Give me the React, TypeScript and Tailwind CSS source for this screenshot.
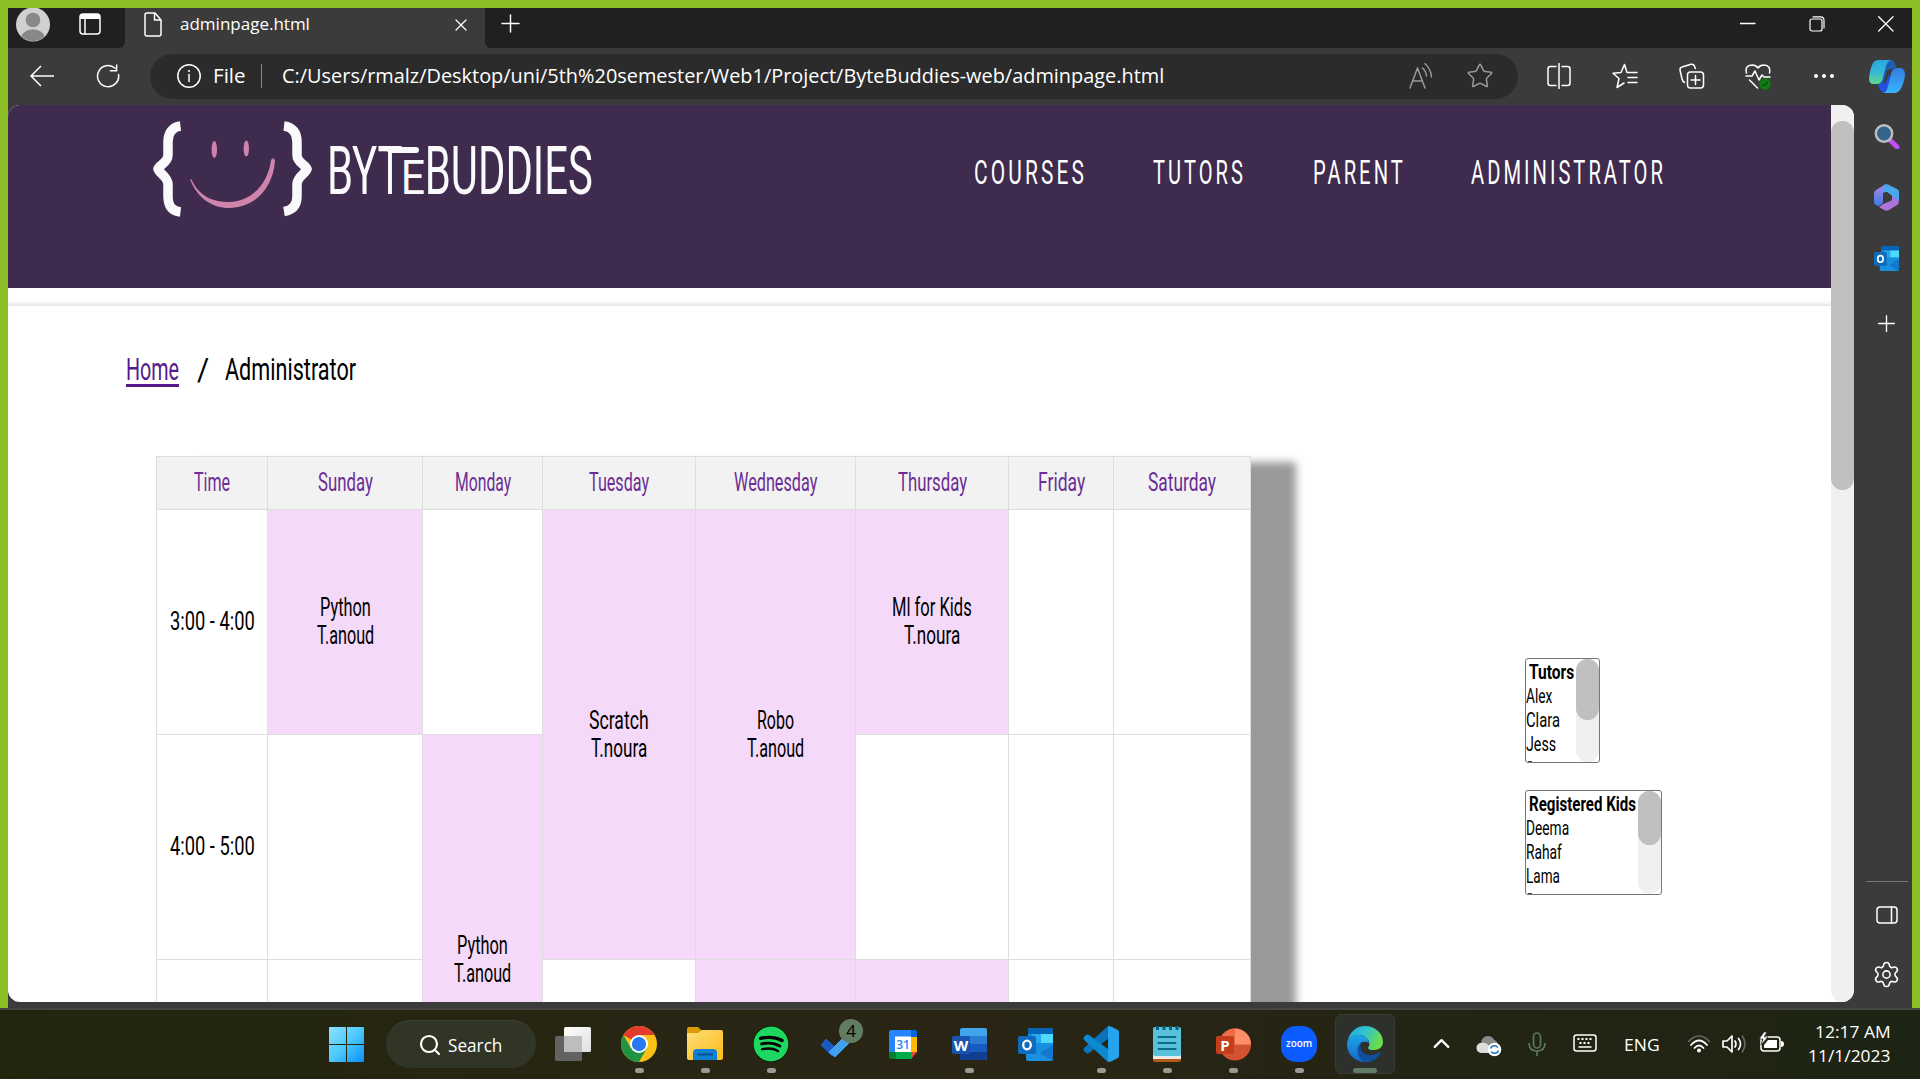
import { useLayoutEffect, useRef } from "react";
import type { ReactNode } from "react";
import { Settings, Search, Star, X, Plus, ChevronUp } from "lucide-react";
import { FaSpotify } from "react-icons/fa";

const page = "font-['Roboto',sans-serif]";
const ui = "font-['Open_Sans','Noto_Sans',sans-serif]";

/* Text condensed horizontally to a fixed advance width. */
function Fit({ w, className = "", display = "inline-block", children }: { w: number; className?: string; display?: string; children: ReactNode }) {
  const ref = useRef<HTMLSpanElement>(null);
  useLayoutEffect(() => {
    const el = ref.current;
    if (el) el.style.transform = `scaleX(${w / el.offsetWidth})`;
  }, [w]);
  return (
    <span className={`${display} shrink-0 whitespace-nowrap ${className}`} style={{ width: w }}>
      <span ref={ref} className="inline-block origin-left">{children}</span>
    </span>
  );
}

function Svg({ w, h, vb, className = "", children }: { w: number; h: number; vb?: string; className?: string; children: ReactNode }) {
  return (
    <svg width={w} height={h} viewBox={vb ?? `0 0 ${w} ${h}`} preserveAspectRatio="none" fill="none" stroke="none" className={`block shrink-0 ${className}`}>
      {children}
    </svg>
  );
}

const line = { stroke: "#fff", strokeWidth: 1.5, fill: "none", strokeLinecap: "round", strokeLinejoin: "round" } as const;

function TabBar() {
  return (
    <div className="flex h-10 bg-[#3b3b3b]">
      <div className="flex w-[117px] rounded-br-md bg-[#202020] pl-2">
        <Svg w={34} h={34}>
          <circle cx="17" cy="16.5" r="17" fill="#d2d0ce" />
          <clipPath id="pf"><circle cx="17" cy="16.5" r="16.5" /></clipPath>
          <g clipPath="url(#pf)" fill="#8a8886">
            <circle cx="17" cy="12" r="7.3" />
            <ellipse cx="17" cy="31" rx="12" ry="9.8" />
          </g>
        </Svg>
        <Svg w={22} h={22} className="mt-[5px] ml-[29px]">
          <rect x="1" y="1" width="20" height="20" rx="3" {...line} />
          <path d="M1 6V3Q1 1 4 1H18Q21 1 21 3V6Z" fill="#fff" />
          <path d="M6 6V21" {...line} />
        </Svg>
      </div>
      <div className="flex w-[360px] pl-[19px]">
        <Svg w={18} h={25} className="mt-1">
          <path d="M1 3Q1 1 3 1H11L17 8V22Q17 24 15 24H3Q1 24 1 22ZM10.500 1V8H17" {...line} />
        </Svg>
        <Fit w={130} className={`ml-[18px] mt-[3px] text-[17px] leading-[25px] text-white ${ui}`}>adminpage.html</Fit>
        <X className="mt-[7px] ml-[141px] text-white" size={20} strokeWidth={1.5} />
      </div>
      <div className="flex flex-1 rounded-bl-md bg-[#202020] text-white">
        <Plus className="mt-px ml-[11px]" size={29} strokeWidth={1.2} />
        <Svg w={16} h={16} className="mt-2 ml-[1215px]"><path d="M0 7.500H15" {...line} strokeWidth="1.3" /></Svg>
        <Svg w={16} h={16} className="mt-2 ml-[53px]">
          <rect x="1" y="3" width="12" height="12" rx="2" {...line} strokeWidth="1.2" />
          <path d="M4 .8H11.500Q15 .8 15 4.500V12" {...line} strokeWidth="1.2" />
        </Svg>
        <Svg w={16} h={16} className="mt-2 ml-[53px]"><path d="M.7.700 15 15M15 .7.700 15" {...line} strokeWidth="1.3" /></Svg>
      </div>
    </div>
  );
}

function ToolBar() {
  return (
    <div className="flex h-[57px] items-center bg-[#3b3b3b] pb-px pl-[22px]">
      <Svg w={24} h={22} className=""><path d="M24 11H1M11 1 1 11 11 21" {...line} strokeLinecap="butt" /></Svg>
      <Svg w={24} h={24} vb="0 0 25 25" className="ml-[42px]">
        <path d="M20 4.500A11 11 0 1 0 23.500 11" {...line} />
        <path d="M21.500 1V7H15" {...line} />
      </Svg>
      <div className="ml-[30px] flex h-[45px] w-[1368px] items-center rounded-full bg-[#2b2b2b] pl-[27px]">
        <Svg w={24} h={24}>
          <circle cx="12" cy="12" r="11.200" {...line} />
          <path d="M12 10.500V17.500" {...line} />
          <circle cx="12" cy="7" r="1.100" fill="#fff" />
        </Svg>
        <Fit w={33} className={`ml-3 text-xl leading-7 text-white ${ui}`}>File</Fit>
        <div className="ml-[15px] h-6 w-px bg-[#8a8a8a]" />
        <Fit w={882} className={`ml-5 text-xl leading-7 text-white ${ui}`}>C:/Users/rmalz/Desktop/uni/5th%20semester/Web1/Project/ByteBuddies-web/adminpage.html</Fit>
        <Svg w={24} h={26} className="ml-[245px]">
          <path d="M1 25 8.500 5 16 25M3.800 18H13.200M13.500 5Q17 8 17.500 13M16 .8Q22 6 22.500 14" {...line} stroke="#9a9a9a" />
        </Svg>
        <Star className="ml-[33px] text-[#9a9a9a]" size={28} strokeWidth={1.300} />
      </div>
      <Svg w={24} h={26} className="ml-[29px]">
        <path d="M9 3.500H3.500Q1 3.500 1 6V20Q1 22.500 3.500 22.500H9M15 3.500H20.500Q23 3.500 23 6V20Q23 22.500 20.500 22.500H15M12 0V26" {...line} />
      </Svg>
      <Svg w={26} h={26} className="ml-[41px]">
        <path d="M15 9.500 12.500 1.500 9 9.500 1 10.200 7 15.500 5 24.500 12 20M15 9.500H25M16 14.500H25M16 19.500H25" {...line} />
      </Svg>
      <Svg w={26} h={26} className="ml-[41px]">
        <rect x="8.500" y="9" width="16" height="16" rx="3" {...line} />
        <path d="M16.500 12.500V21.500M12 17H21M5.500 19.500Q3.500 18.500 3 16L1 7Q.7 4.500 3 4L12 1.200Q15 .8 15.700 3.500L16.300 5.500" {...line} />
      </Svg>
      <Svg w={26} h={27} className="ml-[40px]">
        <path d="M1.500 10Q-.5 2.500 7 2Q11 2 13 5Q15 2 19 2Q26 2.500 24.500 10M1 13H7L10 8 14 17 17 12 19 14H25M4.500 17 12.500 25" {...line} />
        <circle cx="20" cy="21" r="5.800" fill="#107c10" />
        <path d="M17.500 21 19.300 23 23 19" stroke="#222" strokeWidth="1" />
      </Svg>
      <Svg w={22} h={6} className="ml-[42px]"><g fill="#fff"><circle cx="3" cy="3" r="2" /><circle cx="11" cy="3" r="2" /><circle cx="19" cy="3" r="2" /></g></Svg>
      <Svg w={36} h={33} className="ml-[34px]">
        <defs>
          <linearGradient id="cp1" x1="0" y1="0" x2="0" y2="1"><stop stopColor="#2aa7dc" /><stop offset=".5" stopColor="#35b8d8" /><stop offset="1" stopColor="#63d98c" /></linearGradient>
          <linearGradient id="cp2" x1="0" y1="0" x2="0" y2="1"><stop stopColor="#2f7de0" /><stop offset="1" stopColor="#3cb4fb" /></linearGradient>
        </defs>
        <path d="M8 0H23Q26 1 27 8L18 10 14 25H9L15 33H17Q11 33 9 25Z" fill="#1c5fb5" />
        <path d="M9 24H16L20 14 21 28 15 33Q11 32 9 24Z" fill="#244fe0" />
        <path d="M9 0H22Q18 1 16.500 8L13.500 19Q12 24 8 24H4Q0 24 0 18Q1 9 4 3Q6 0 9 0Z" fill="url(#cp1)" />
        <path d="M27 8H32Q36 9 36 15Q35 24 31 30Q29 33 26 33H14Q18 32 19 26L22 14Q23 9 27 8Z" fill="url(#cp2)" />
      </Svg>
    </div>
  );
}

function OutlookArt() {
  return (
    <>
      <rect x="10" y="0" width="25" height="26" rx="2" fill="#1490df" />
      <path d="M10 2Q10 0 12 0H33Q35 0 35 2V6H10Z" fill="#0364b8" />
      <rect x="22" y="6" width="13" height="9" fill="#50d9ff" />
      <rect x="14" y="6" width="9" height="9" fill="#28a8ea" />
      <path d="M8 18 22 26 35 17V30Q35 33 32 33H10Q8 33 8 30Z" fill="#1b8fe0" />
      <path d="M22 25 35 33V17Z" fill="#1677cf" />
      <rect x="0" y="8" width="18" height="18" rx="2" fill="#0f6cbd" />
      <ellipse cx="9" cy="17" rx="3.800" ry="4.300" stroke="#fff" strokeWidth="2.300" />
    </>
  );
}

function SideBar() {
  return (
    <div className="flex w-[58px] flex-col items-center bg-[#3b3b3b] pl-[7px]">
      <Svg w={26} h={26} className="mt-[18px]">
        <path d="M16 17 23 24" stroke="#c04df5" strokeWidth="5" strokeLinecap="round" />
        <circle cx="10" cy="10.500" r="8.200" fill="#35648c" stroke="#bdbdbd" strokeWidth="2.500" />
      </Svg>
      <Svg w={25} h={27} className="mt-[35px]">
        <defs><linearGradient id="m3" x1="0" y1="0" x2="0" y2="1"><stop stopColor="#b487ea" /><stop offset="1" stopColor="#3a7be0" /></linearGradient></defs>
        <path d="M12 0 2 6Q0 7 0 10V18Q0 21 5 22L9 19V7Z" fill="url(#m3)" />
        <path d="M11 0 9 3V9L13 8 19 13 25 17V8Q25 6 23 5L14 .5Q12 0 11 0Z" fill="#4aa7ee" />
        <path d="M18 12V16L9 20 5 23 11 26.500Q13 27 15 26L23 21Q25 20 25 17Z" fill="#ac74dc" />
        <path d="M9 9 13 8 18 12V16L9 20Z" fill="#3b3b3b" />
      </Svg>
      <Svg w={25} h={25} vb="0 0 35 33" className="mt-[35px]"><OutlookArt /></Svg>
      <Plus className="mt-[39px] text-white" size={27} strokeWidth={1.200} />
      <div className="mt-auto h-px w-[42px] bg-[#777]" />
      <Svg w={22} h={18} className="mt-6"><rect x="1" y="1" width="20" height="16" rx="3" {...line} /><path d="M15.500 1V17" {...line} /></Svg>
      <Settings className="mt-[36px] mb-[13px] text-white" size={29} strokeWidth={1.300} />
    </div>
  );
}

const nav = [
  { label: "COURSES", w: 113, cls: "" },
  { label: "TUTORS", w: 93, cls: "ml-[66px]" },
  { label: "PARENT", w: 93, cls: "ml-[67px]" },
  { label: "ADMINISTRATOR", w: 195, cls: "ml-[65px]" },
];

function Header() {
  return (
    <header className="flex h-[183px] bg-[#3e2b4e]">
      <Svg w={165} h={105} vb="150 115 165 105" className="mt-2.5 ml-[142px]">
        <path d="M180.500 126C172 127 168 133 168 142V155C168 163 159 165 158 169C159 173 168 177 168 184V196C168 206 172 211 180.500 212" stroke="#fafafc" strokeWidth="9.500" />
        <path d="M284 126C293 127 297 133 297 142V155C297 163 306 165 307 169C306 173 297 177 297 184V196C297 205 293 210 284 211.500" stroke="#fafafc" strokeWidth="9.500" />
        <ellipse cx="214.300" cy="149.500" rx="2.700" ry="8.500" fill="#cf83ad" />
        <ellipse cx="246.300" cy="148.500" rx="2.700" ry="8" fill="#cf83ad" />
        <path d="M190 179C197 198 212 208 229 208C255 208 273 188 275 161Q274 156 271 160C268 185 250 202 229 202C212 202 199 196 191.500 179.500Z" fill="#cf83ad" />
      </Svg>
      <div className={`relative mt-8 ml-[12px] h-[68px] text-[67px] leading-[68px] text-[#fafafc] ${page}`}>
        <Fit w={266}>BYT<span className="mr-[11px] -ml-[3px] inline-block origin-left scale-x-[1.4] text-[49px] leading-[49px]">E</span>BUDDIES</Fit>
        <div className="absolute top-[10px] left-[60px] h-[6px] w-[32px] rounded-sm bg-[#fafafc]" />
      </div>
      <nav className={`mt-12 ml-[381px] flex h-10 text-[33.500px] leading-10 tracking-[5px] text-white ${page}`}>
        {nav.map((n) => <a key={n.label} className={n.cls}><Fit w={n.w}>{n.label}</Fit></a>)}
      </nav>
    </header>
  );
}

const days: [string, number][] = [
  ["Time", 36], ["Sunday", 55], ["Monday", 56], ["Tuesday", 60], ["Wednesday", 83], ["Thursday", 69], ["Friday", 47], ["Saturday", 68],
];

function Cell({ lines = [], cls = "bg-white" }: { lines?: [string, number][]; cls?: string }) {
  return (
    <div className={`flex flex-col items-center justify-center border-t border-l border-[#ddd] leading-7 ${cls}`}>
      {lines.map(([t, w]) => <Fit key={t} w={w} className="h-7">{t}</Fit>)}
    </div>
  );
}

function Schedule() {
  const pink = "bg-[#f4d9f8]";
  return (
    <div className={`mt-[67px] ml-[148px] grid w-[1095px] grid-cols-[111px_155px_120px_153px_160px_153px_105px_137px] grid-rows-[53px_225px_225px_225px] border-r border-[#ddd] text-[25px] text-black shadow-[45px_6px_8px_rgba(0,0,0,0.4)] ${page}`}>
      {days.map(([d, w]) => <Cell key={d} lines={[[d, w]]} cls="bg-[#f2f2f2] text-[#6c2d94]" />)}
      <Cell lines={[["3:00 - 4:00", 85]]} />
      <Cell lines={[["Python", 51], ["T.anoud", 57]]} cls={pink} />
      <Cell />
      <Cell lines={[["Scratch", 60], ["T.noura", 56]]} cls="row-span-2 bg-[#f4d9f8]" />
      <Cell lines={[["Robo", 37], ["T.anoud", 57]]} cls="row-span-2 bg-[#f4d9f8]" />
      <Cell lines={[["Ml for Kids", 80], ["T.noura", 56]]} cls={pink} />
      <Cell /><Cell />
      <Cell lines={[["4:00 - 5:00", 85]]} />
      <Cell />
      <Cell lines={[["Python", 51], ["T.anoud", 57]]} cls="row-span-2 bg-[#f4d9f8]" />
      <Cell /><Cell /><Cell />
      <Cell /><Cell /><Cell />
      <Cell cls={pink} /><Cell cls={pink} />
      <Cell /><Cell />
    </div>
  );
}

function ListBox({ title, tw, items, box, thumb }: { title: string; tw: number; items: [string, number][]; box: string; thumb: string }) {
  return (
    <div className={`flex h-[105px] justify-between overflow-hidden rounded-[3px] border border-[#767676] bg-white text-black ${box} ${page}`}>
      <div className="relative w-0 pt-px">
        <Fit w={tw} display="block" className="ml-[3px] h-[25px] text-[21px] leading-[24px] font-bold">{title}</Fit>
        {items.map(([t, w]) => <Fit key={t} w={w} display="block" className="h-6 text-[19.500px] leading-6">{t}</Fit>)}
        <div className="absolute bottom-0 left-0.5 h-px w-1 bg-[#444]" />
      </div>
      <div className="w-[23px] shrink-0 rounded-full bg-[#f0f0f0]"><div className={`rounded-full bg-[#c0c0c0] ${thumb}`} /></div>
    </div>
  );
}

function Page() {
  return (
    <main className="flex h-[897px] w-[1846px] overflow-hidden rounded-xl bg-white">
      <div className="h-full w-[1823px] overflow-hidden">
        <Header />
        <div className="h-[18px] bg-linear-to-b from-white from-70% to-[#e6e6e6]" />
        <div className={`mt-[43px] flex h-10 items-center pl-[118px] text-[32px] leading-10 text-black ${page}`}>
          <a className="relative text-[#551a8b]">
            <Fit w={53}>Home</Fit>
            <span className="absolute bottom-[2px] left-0 h-[3px] w-[53px] bg-[#551a8b]" />
          </a>
          <Fit w={12} className="ml-[18px]">/</Fit>
          <Fit w={131} className="ml-4">Administrator</Fit>
        </div>
        <div className="flex">
          <Schedule />
          <div className="mt-[269px] ml-[274px]">
            <ListBox title="Tutors" tw={45} items={[["Alex", 26], ["Clara", 34], ["Jess", 30]]} box="w-[75px]" thumb="h-[61px]" />
            <div className="h-[27px]" />
            <ListBox title="Registered Kids" tw={107} items={[["Deema", 43], ["Rahaf", 36], ["Lama", 34]]} box="w-[137px]" thumb="h-[54px]" />
          </div>
        </div>
      </div>
      <div className="w-[23px] rounded-b-full bg-[#f0f0f0] pt-4"><div className="h-[369px] rounded-full bg-[#c0c0c0]" /></div>
    </main>
  );
}

function TaskIcon({ children, dot = true }: { children: ReactNode; dot?: boolean }) {
  return (
    <div className="flex w-[66px] flex-col items-center pt-4">
      <div className="flex h-9 items-center justify-center">{children}</div>
      {dot && <div className="mt-1.5 h-[5px] w-[9px] rounded-full bg-[#9b9b95]" />}
    </div>
  );
}

function Letter({ x, children }: { x: number; children: string }) {
  return <text x={x} y="22.500" fill="#fff" fontSize="15" fontWeight="700" textAnchor="middle" fontFamily="Open Sans, sans-serif">{children}</text>;
}

function TaskBar() {
  return (
    <footer className={`flex h-[71px] border-t-2 border-[#45463f] bg-linear-to-r from-[#22260f] via-[#2a2515] to-[#1d2413] text-white ${ui}`}>
      <Svg w={35} h={35} className="mt-[17px] ml-[329px]">
        <defs><linearGradient id="win" x1="0" y1="0" x2="35" y2="35" gradientUnits="userSpaceOnUse"><stop stopColor="#8fe0ff" /><stop offset=".5" stopColor="#4cc9fa" /><stop offset="1" stopColor="#0a8ffa" /></linearGradient></defs>
        <path d="M0 1Q0 0 1 0H17V17H0ZM18 0H34Q35 0 35 1V17H18ZM0 18H17V35H1Q0 35 0 34ZM18 18H35V34Q35 35 34 35H18Z" fill="url(#win)" />
      </Svg>
      <div className="mt-2.5 ml-[22px] flex h-12 w-[150px] items-center rounded-full border-t border-[#3c4132] bg-[#303526] pl-[32px]">
        <Search size={24} strokeWidth={2.200} />
        <Fit w={54} className="ml-[6px] text-[17.500px] leading-6">Search</Fit>
      </div>
      <div className="ml-[4px] flex">
        <TaskIcon dot={false}>
          <Svg w={36} h={34}>
            <defs><linearGradient id="tv" x1="0" y1="0" x2="1" y2="1"><stop stopColor="#fff" /><stop offset="1" stopColor="#dedede" /></linearGradient></defs>
            <rect x="9" y="0" width="27" height="25" rx="1.500" fill="url(#tv)" />
            <rect x="0" y="9" width="27" height="25" rx="1.500" fill="#626262" />
            <rect x="9" y="9" width="18" height="16" fill="#bdbdbd" />
          </Svg>
        </TaskIcon>
        <TaskIcon>
          <Svg w={36} h={36} vb="0 0 48 48">
            <circle cx="24" cy="24" r="24" fill="#fbc116" />
            <path d="M24 24 3.200 12A24 24 0 0 1 44.800 12H24Z" fill="#e33b2e" />
            <path d="M3.200 12A24 24 0 0 0 24 48L34.400 30 24 24 13.600 30Z" fill="#229342" />
            <circle cx="24" cy="24" r="12" fill="#fff" />
            <circle cx="24" cy="24" r="9.500" fill="#2a78f0" />
          </Svg>
        </TaskIcon>
        <TaskIcon>
          <Svg w={36} h={34}>
            <defs><linearGradient id="fx" x1="0" y1="0" x2="1" y2="1"><stop stopColor="#ffdd7c" /><stop offset="1" stopColor="#fbbc16" /></linearGradient></defs>
            <path d="M0 2Q0 0 2 0H11L15 4 12 8H0Z" fill="#dc9b06" />
            <path d="M0 6H11L15 3H34Q36 3 36 5V31Q36 33 34 33H2Q0 33 0 31Z" fill="url(#fx)" />
            <path d="M6 33V26Q6 22 10 22H26Q30 22 30 26V33Z" fill="#0f7fd0" />
            <path d="M11 27.500H25" stroke="#064f94" strokeWidth="2" strokeLinecap="round" />
          </Svg>
        </TaskIcon>
        <TaskIcon>
          <div className="rounded-full bg-black"><FaSpotify size={36} color="#1ed760" /></div>
        </TaskIcon>
        <div className="relative">
          <TaskIcon dot={false}>
            <Svg w={34} h={24} className="mt-1">
              <path d="M1 11 6 5 17 15 12 22Z" fill="#185abd" stroke="#185abd" strokeWidth="1" strokeLinejoin="round" />
              <path d="M9 18 26 1 32 6 15 23Z" fill="#41a0f0" stroke="#41a0f0" strokeWidth="1" strokeLinejoin="round" />
            </Svg>
          </TaskIcon>
          <div className="absolute top-[9px] left-[35px] flex h-6 w-6 items-center justify-center rounded-full bg-[#627b63] text-[17px] text-black">4</div>
        </div>
        <TaskIcon dot={false}>
          <Svg w={28} h={29}>
            <path d="M0 2Q0 0 2 0H22V7H7V22H0Z" fill="#2684fc" />
            <path d="M22 0H26Q28 0 28 2V7H22Z" fill="#0066da" />
            <rect x="22" y="7" width="6" height="15" fill="#ffba00" />
            <path d="M0 22H7V29H2Q0 29 0 27Z" fill="#00832d" />
            <rect x="7" y="22" width="15" height="7" fill="#00ac47" />
            <path d="M22 22H28L22 29Z" fill="#ea4335" />
            <rect x="6" y="6.500" width="16" height="15.500" fill="#fff" />
            <text x="14" y="19" fontSize="12" fontWeight="600" textAnchor="middle" fill="#2684fc" fontFamily="Open Sans, sans-serif">31</text>
          </Svg>
        </TaskIcon>
        <TaskIcon>
          <Svg w={35} h={33}>
            <rect x="8" width="27" height="32" rx="2" fill="#41a5ee" />
            <rect x="8" y="8" width="27" height="9" fill="#2b7cd3" />
            <rect x="8" y="16" width="27" height="9" fill="#185abd" />
            <path d="M8 24H35V30Q35 32 33 32H10Q8 32 8 30Z" fill="#103f91" />
            <rect y="8" width="18" height="18" rx="2" fill="#1854b0" />
            <Letter x={9}>W</Letter>
          </Svg>
        </TaskIcon>
        <TaskIcon dot={false}><Svg w={35} h={33}><OutlookArt /></Svg></TaskIcon>
        <TaskIcon>
          <Svg w={36} h={36}>
            <path d="M25 0 1 22Q0 23 1 25L3 27Q4 28 6 27L33 7Z" fill="#0a73ba" />
            <path d="M25 36 1 14Q0 13 1 11L3 9Q4 8 6 9L33 29Z" fill="#0b8ad0" />
            <path d="M25 0Q27 0 29 1L35 4Q36 5 36 6V30Q36 31 35 32L29 35Q27 36 25 36V10Z" fill="#26a3ee" />
          </Svg>
        </TaskIcon>
        <TaskIcon>
          <Svg w={28} h={36}>
            <rect y="30" width="28" height="6" rx="2" fill="#b65a11" />
            <rect y="26" width="28" height="7" fill="#e9e9e9" />
            <rect y="1" width="28" height="29" rx="2" fill="#58c2dc" />
            <path d="M4.500 0V4M11 0V4M17.500 0V4M24 0V4" stroke="#0b6078" strokeWidth="3" />
            <path d="M5.500 11H22.500M5.500 17H22.500M5.500 23H22.500" stroke="#0b6a87" strokeWidth="2" strokeLinecap="round" />
          </Svg>
        </TaskIcon>
        <TaskIcon>
          <Svg w={35} h={33}>
            <circle cx="19" cy="16.500" r="16" fill="#d35230" />
            <path d="M19 .5A16 16 0 0 1 35 16.500H19Z" fill="#ff8f6b" />
            <path d="M19 .5A16 16 0 0 0 3 16.500H19Z" fill="#ed6c47" />
            <rect y="8" width="18" height="18" rx="2" fill="#c43e1c" />
            <Letter x={9}>P</Letter>
          </Svg>
        </TaskIcon>
        <TaskIcon>
          <div className="flex h-9 w-9 items-center justify-center rounded-[15px] bg-[#0b5cff] pb-0.5 text-[11px] font-semibold text-white"><Fit w={26}>zoom</Fit></div>
        </TaskIcon>
        <div className="mt-1 ml-[3px] flex h-[60px] w-[60px] flex-col items-center rounded-md border border-[#393c35] bg-[#2e312b] pt-[11px]">
          <Svg w={36} h={36}>
            <defs>
              <linearGradient id="e1" x1="0" y1="0" x2="1" y2=".4"><stop stopColor="#1fa6dd" /><stop offset=".5" stopColor="#2fc3cf" /><stop offset="1" stopColor="#6bdc4b" /></linearGradient>
              <linearGradient id="e2" x1="0" y1="0" x2="0" y2="1"><stop stopColor="#1fa4e6" /><stop offset="1" stopColor="#1268c8" /></linearGradient>
            </defs>
            <path d="M1 15C2 6 10 0 18 0C28 0 36 7 36 16C36 21 32 24 27 24C22 24 20 23 22 20C24 15 19 9 12 9C7 9 3 11 1 15Z" fill="url(#e1)" />
            <path d="M0 18C0 12 6 9 12 9C18 9 22 13 22 17C16 13 10 19 12 26C13 31 17 35 21 36C10 37 0 30 0 18Z" fill="url(#e2)" />
            <path d="M16 15C11 20 14 28 22 29C27 29 30 28 33 26Q34 27 33 28C29 35 23 37 18 36C10 33 7 20 16 15Z" fill="#0f4f9e" />
          </Svg>
          <div className="mt-1.5 h-[5px] w-6 rounded-full bg-[#627b63]" />
        </div>
      </div>
      <div className="ml-[33px] flex">
        <ChevronUp className="mt-[20px]" size={27} strokeWidth={2} />
        <Svg w={26} h={22} className="mt-[25px] ml-[21px]">
          <circle cx="12" cy="8" r="7" fill="#8b8b8b" /><circle cx="17" cy="10" r="5" fill="#8b8b8b" />
          <path d="M5 18Q0 17 .5 12Q2 7 8 8Q12 8 14 13V18Z" fill="#ddd" />
          <circle cx="18.500" cy="14.500" r="6.800" fill="#fff" />
          <path d="M14.500 13.500Q16 10 20 11L22 12.500M22.500 15.500Q21 19 17 18L15 16.500" stroke="#1b72c0" strokeWidth="1.500" />
        </Svg>
        <Svg w={18} h={24} className="mt-[22px] ml-[26px]">
          <rect x="5.500" y="1" width="7" height="15" rx="3.500" stroke="#59775a" strokeWidth="1.700" />
          <path d="M1 11Q1 19 9 19Q17 19 17 11M9 19V24" stroke="#59775a" strokeWidth="1.700" />
        </Svg>
        <Svg w={24} h={18} className="mt-[24px] ml-[27px]">
          <rect x="1" y="1" width="22" height="16" rx="2.500" {...line} />
          <path d="M4.500 5H20M6.500 9H18" stroke="#fff" strokeWidth="2" strokeDasharray="2 2" /><path d="M6 13H18" {...line} />
        </Svg>
        <Fit w={36} className="mt-[23px] ml-[27px] text-[17px] leading-6">ENG</Fit>
        <Svg w={24} h={18} className="mt-[25px] ml-[27px]">
          <path d="M1 7Q12-5 23 7" stroke="#656861" strokeWidth="1.700" />
          <path d="M4 10Q12 1 20 10M7.500 13Q12 8 16.500 13" {...line} strokeWidth="1.800" />
          <circle cx="12" cy="15.500" r="2" fill="#fff" />
        </Svg>
        <Svg w={25} h={20} className="mt-[24px] ml-[11px]">
          <path d="M1 7H5L10 2V18L5 13H1ZM13 7Q15 10 13 13M16.500 4.500Q20.500 10 16.500 15.500" {...line} strokeWidth="1.700" />
          <path d="M20 1.500Q26 10 20 18.500" stroke="#656861" strokeWidth="1.700" />
        </Svg>
        <Svg w={25} h={21} className="mt-[22px] ml-[12px]">
          <rect x="2" y="5" width="19" height="14" rx="3" {...line} />
          <path d="M9 8H18V16H5V13ZM22 9Q25 9 25 12Q25 15 22 15Z" fill="#fff" />
          <path d="M5 0 0 7H4L2 13 9 5H5L8 0Z" fill="#fff" stroke="#22251b" strokeWidth=".7" />
        </Svg>
        <div className="mt-[10px] ml-[23px] flex w-[84px] flex-col items-end text-[17px] leading-6">
          <Fit w={76}>12:17 AM</Fit>
          <Fit w={83}>11/1/2023</Fit>
        </div>
      </div>
    </footer>
  );
}

export default function App() {
  return (
    <div className="flex h-[1079px] w-[1920px] flex-col overflow-hidden bg-[#22251a]">
      <div className="h-[1008px] border-x-8 border-t-8 border-[#8cbe27] bg-[#3b3b3b]">
        <TabBar />
        <ToolBar />
        <div className="flex h-[897px]">
          <Page />
          <SideBar />
        </div>
      </div>
      <TaskBar />
    </div>
  );
}
